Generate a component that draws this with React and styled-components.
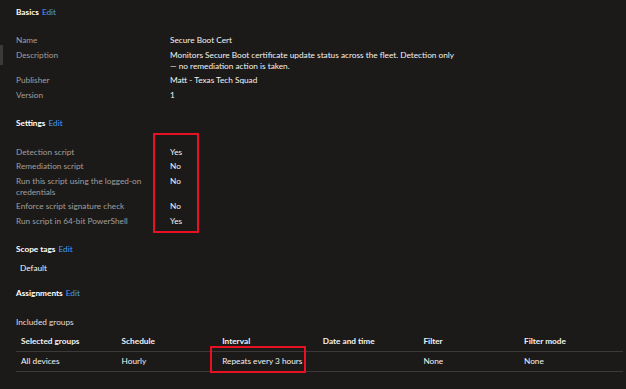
import styled, { createGlobalStyle } from 'styled-components'

const Global = createGlobalStyle`
html, body {
    margin: 0;
    padding: 0;
    background: #1b1a19;
}
body {
    font-family: "Segoe UI", Lato, "Noto Sans", sans-serif;
    font-size: 8.25px;
    color: #e1dfdd;
}
`

const basics = [
    ['Name', 'Secure Boot Cert'],
    ['Description', 'Monitors Secure Boot certificate update status across the fleet. Detection only — no remediation action is taken.'],
    ['Publisher', 'Matt - Texas Tech Squad'],
    ['Version', '1'],
]

const settings = [
    ['Detection script', 'Yes'],
    ['Remediation script', 'No'],
    ['Run this script using the logged-on credentials', 'No'],
    ['Enforce script signature check', 'No'],
    ['Run script in 64-bit PowerShell', 'Yes'],
]

const columns = ['Selected groups', 'Schedule', 'Interval', 'Date and time', 'Filter', 'Filter mode']
const groups = [['All devices', 'Hourly', 'Repeats every 3 hours', '', 'None', 'None']]

const App = () => {
    return (
        <Page>
            <Global />
            <SideTab />
            <Heading>Basics <Edit>Edit</Edit></Heading>
            <Props>
                {basics.map(([k, v]) => (
                    <Row key={k}>
                        <Label>{k}</Label>
                        <Value $wide>{v}</Value>
                    </Row>
                ))}
            </Props>

            <Heading>Settings <Edit>Edit</Edit></Heading>
            <Props>
                {settings.map(([k, v]) => (
                    <Row key={k}>
                        <Label>{k}</Label>
                        <Value>{v}</Value>
                    </Row>
                ))}
            </Props>

            <Heading>Scope tags <Edit>Edit</Edit></Heading>
            <Tag>Default</Tag>

            <Heading>Assignments <Edit>Edit</Edit></Heading>
            <SubTitle>Included groups</SubTitle>
            <Table>
                <colgroup>
                    {columns.map((c, i) => <col key={c} style={{ width: i < 5 ? 100.6 : 'auto' }} />)}
                </colgroup>
                <thead>
                    <tr>
                        {columns.map(c => <Th key={c}>{c}</Th>)}
                    </tr>
                </thead>
                <tbody>
                    {groups.map((g, i) => (
                        <tr key={i}>
                            {g.map((c, j) => <Td key={j}>{c}</Td>)}
                        </tr>
                    ))}
                </tbody>
            </Table>

            <Mark $x={153} $y={133} $w={46} $h={100} />
            <Mark $x={210} $y={346} $w={96} $h={27} />
        </Page>
    )
}

const Page = styled.div`
position: relative;
height: 389px;
overflow: hidden;
padding: 6.5px 3px 0 16px;
box-sizing: border-box;
line-height: 11px;
`
const SideTab = styled.div`
position: absolute;
left: 0;
top: 45px;
width: 3px;
height: 20px;
background: #3b3a39;
`
const Heading = styled.div`
font-weight: 700;
color: #ffffff;
height: 11px;
margin-bottom: 17.5px;
`
const Edit = styled.span`
font-weight: 400;
color: #479ef5;
margin-left: 1px;
`
const Props = styled.div`
display: flex;
flex-direction: column;
gap: 3.5px;
margin-bottom: 17.5px;
`
const Row = styled.div`
display: grid;
grid-template-columns: 154px 1fr;
`
const Label = styled.div`
color: #a19f9d;
width: 135px;
`
const Value = styled.div`
color: #f3f2f1;
max-width: ${p => (p.$wide ? '285px' : 'none')};
`
const Tag = styled.div`
color: #f3f2f1;
padding-left: 4px;
margin-top: -10px;
margin-bottom: 14.5px;
`
const SubTitle = styled.div`
color: #e1dfdd;
margin-top: 0;
margin-bottom: 4px;
`
const Table = styled.table`
width: 607px;
border-collapse: collapse;
table-layout: fixed;
`
const Th = styled.th`
text-align: left;
font-weight: 700;
color: #f3f2f1;
padding: 0 5px;
height: 19px;
vertical-align: middle;
border-bottom: 1px solid #3b3a39;
`
const Td = styled.td`
color: #f3f2f1;
padding: 0 5px;
height: 19px;
vertical-align: middle;
border-bottom: 1px solid #3b3a39;
`
const Mark = styled.div`
position: absolute;
left: ${p => p.$x}px;
top: ${p => p.$y}px;
width: ${p => p.$w}px;
height: ${p => p.$h}px;
border: 2px solid #e81123;
box-sizing: border-box;
`

export default App
